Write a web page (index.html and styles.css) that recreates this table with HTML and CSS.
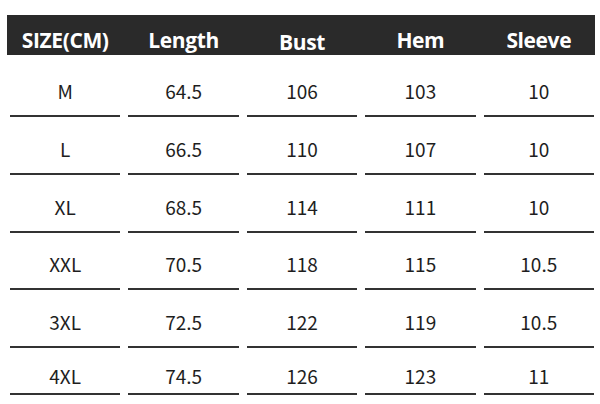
FILE: index.html
```html
<!DOCTYPE html>
<html lang="zh-CN">
<head>
<meta charset="utf-8">
<link rel="stylesheet" href="styles.css">
</head>
<body>
<div class="chart">
  <div class="head">
    <div class="hcell">SIZE(CM)</div>
    <div class="hcell">Length</div>
    <div class="hcell bust">Bust</div>
    <div class="hcell">Hem</div>
    <div class="hcell">Sleeve</div>
  </div>
  <div class="body">
    <div class="row first"><div class="cell">M</div><div class="cell">64.5</div><div class="cell">106</div><div class="cell">103</div><div class="cell">10</div></div>
    <div class="row"><div class="cell">L</div><div class="cell">66.5</div><div class="cell">110</div><div class="cell">107</div><div class="cell">10</div></div>
    <div class="row"><div class="cell">XL</div><div class="cell">68.5</div><div class="cell">114</div><div class="cell">111</div><div class="cell">10</div></div>
    <div class="row short"><div class="cell">XXL</div><div class="cell">70.5</div><div class="cell">118</div><div class="cell">115</div><div class="cell">10.5</div></div>
    <div class="row"><div class="cell">3XL</div><div class="cell">72.5</div><div class="cell">122</div><div class="cell">119</div><div class="cell">10.5</div></div>
    <div class="row last"><div class="cell">4XL</div><div class="cell">74.5</div><div class="cell">126</div><div class="cell">123</div><div class="cell">11</div></div>
  </div>
</div>
</body>
</html>
```
FILE: styles.css
```css
html, body {
  margin: 0;
  padding: 0;
  background: #ffffff;
}
.chart {
  width: 588px;
  margin: 15px 0 0 7px;
}
.head {
  height: 40px;
  background: #2a2a2a;
  display: grid;
  grid-template-columns: repeat(5, 1fr);
  column-gap: 8px;
  padding: 0 1px 0 3px;
  box-sizing: border-box;
}
.hcell {
  color: #ffffff;
  font-family: "Open Sans", "Noto Sans", sans-serif;
  font-weight: 700;
  font-size: 21px;
  line-height: 20px;
  text-align: center;
  padding-top: 15px;
  letter-spacing: -0.4px;
}
.hcell.bust {
  padding-top: 17px;
}
.body {
  padding: 0 1px 0 3px;
}
.row {
  display: grid;
  grid-template-columns: repeat(5, 1fr);
  column-gap: 8px;
  height: 58px;
}
.row.first { height: 62px; }
.row.short { height: 57px; }
.row.last { height: 47px; }
.cell {
  display: flex;
  align-items: flex-end;
  justify-content: center;
  border-bottom: 2px solid #333333;
  padding-bottom: 14px;
  font-family: "Noto Sans CJK SC", "Noto Sans CJK JP", sans-serif;
  font-size: 19px;
  line-height: 20px;
  color: #1e1e1e;
}
.row.last .cell {
  padding-bottom: 7px;
}
```
